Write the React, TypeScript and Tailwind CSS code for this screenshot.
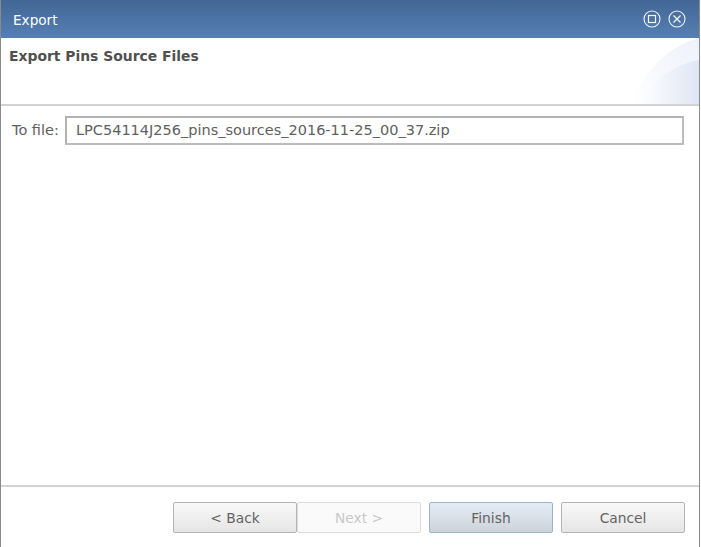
const font = "font-['DejaVu_Sans','Liberation_Sans',sans-serif]";

function WindowButton({ kind }: { kind: "max" | "close" }) {
  return (
    <svg width="18" height="18" viewBox="0 0 18 18" fill="none" stroke="#f2f5fa">
      <circle cx="9" cy="9" r="8" strokeWidth="1.1" />
      {kind === "max" ? (
        <rect x="5.5" y="5.5" width="7" height="7" strokeWidth="1.2" />
      ) : (
        <path d="M5.5 5.5l7 7M12.5 5.5l-7 7" strokeWidth="1.3" />
      )}
    </svg>
  );
}

function WizardButton({ label, variant }: { label: string; variant?: "disabled" | "primary" }) {
  const style =
    variant === "disabled"
      ? "border-[#dcdcdc] bg-[#fafafa] text-[#c8c8c8]"
      : variant === "primary"
        ? "border-[#9db4cd] bg-gradient-to-b from-[#e2ecf6] to-[#ced3da] text-[#636363]"
        : "border-[#b4b4b4] bg-gradient-to-b from-[#f8f8f8] to-[#e6e6e6] text-[#636363]";
  return (
    <div className={`flex h-[31px] w-[124px] items-center justify-center rounded-[2px] border pt-[2px] text-[13.8px] ${style}`}>
      {label}
    </div>
  );
}

export default function App() {
  return (
    <div className="h-[547px] w-[701px] bg-white">
      <div className={`${font} flex h-[547px] w-[700px] flex-col border-x border-[#8a8a8a]`}>
        <div className="flex h-[38px] shrink-0 items-center justify-between bg-gradient-to-b from-[#426795] to-[#557fb4] pl-[12px] pr-[13px] text-[13.6px] text-white">
          <span className="pt-[2px]">Export</span>
          <div className="flex items-center gap-[7px]">
            <WindowButton kind="max" />
            <WindowButton kind="close" />
          </div>
        </div>
        <div className="relative h-[68px] shrink-0 overflow-hidden border-b-2 border-[#d2d2d2] pl-2 pt-[8px] text-[13.9px] font-bold text-[#505050]">
          <svg className="absolute right-0 top-0" width="72" height="66" viewBox="0 0 72 66">
            <defs>
              <linearGradient id="lightWave" x1="0" y1="1" x2="1" y2="0">
                <stop offset="0" stopColor="#ffffff" />
                <stop offset="1" stopColor="#eef1fa" />
              </linearGradient>
              <linearGradient id="darkWave" x1="0" y1="0.6" x2="1" y2="0.6">
                <stop offset="0" stopColor="#ffffff" />
                <stop offset="1" stopColor="#dfe5f4" />
              </linearGradient>
            </defs>
            <path d="M4 66C16 40 32 16 60 4L72 0V66Z" fill="url(#lightWave)" />
            <path d="M12 66C22 46 44 27 72 22V66Z" fill="url(#darkWave)" />
          </svg>
          <span className="relative">Export Pins Source Files</span>
        </div>
        <div className="flex flex-1 items-start pl-[11px] pr-[15px] pt-[10px] text-[14.5px] text-[#606060]">
          <span className="w-[53px] shrink-0 pt-[4px]">To file:</span>
          <div className="flex h-[29px] flex-1 items-center border-2 border-[#b2b2b2] border-b-[#bcbcbc] border-r-[#bcbcbc] pl-[9px]">
            LPC54114J256_pins_sources_2016-11-25_00_37.zip
          </div>
        </div>
        <div className="flex h-[62px] shrink-0 items-start justify-end border-t-2 border-[#d2d2d2] pr-[14px] pt-[15px]">
          <WizardButton label="< Back" />
          <WizardButton label="Next >" variant="disabled" />
          <div className="ml-2">
            <WizardButton label="Finish" variant="primary" />
          </div>
          <div className="ml-2">
            <WizardButton label="Cancel" />
          </div>
        </div>
      </div>
    </div>
  );
}
